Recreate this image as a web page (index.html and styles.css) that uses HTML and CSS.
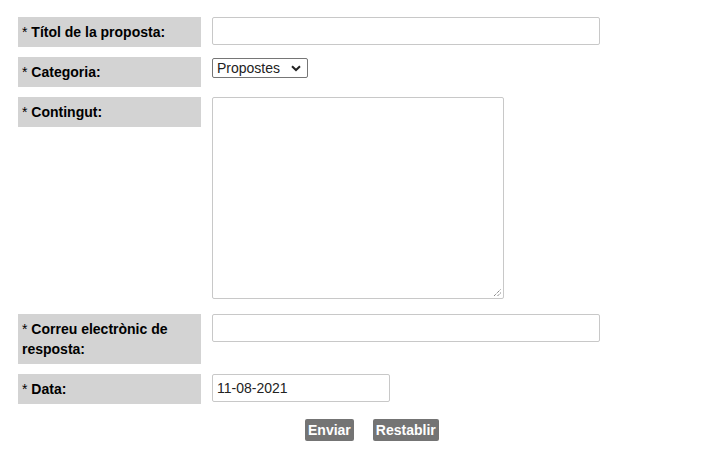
FILE: index.html
```html
<!DOCTYPE html>
<html lang="ca">
<head>
<meta charset="utf-8">
<link rel="stylesheet" href="styles.css">
</head>
<body>
<form class="form">
  <div class="label"><span class="req">*</span> Títol de la proposta:</div>
  <div class="field"><input class="text wide" type="text"></div>

  <div class="label"><span class="req">*</span> Categoria:</div>
  <div class="field">
    <div class="select">
      <span>Propostes</span>
      <svg class="chev" width="10" height="7" viewBox="0 0 10 7"><path d="M1 1.2 L5 5 L9 1.2" fill="none" stroke="#222" stroke-width="2"/></svg>
    </div>
  </div>

  <div class="label"><span class="req">*</span> Contingut:</div>
  <div class="field tall">
    <div class="textarea">
      <svg class="grip" width="9" height="9" viewBox="0 0 9 9"><path d="M1 8 L8 1 M4.5 8 L8 4.5" stroke="#555" stroke-width="1" stroke-dasharray="1 1" fill="none"/></svg>
    </div>
  </div>

  <div class="label"><span class="req">*</span> <span>Correu electrònic de</span><br><span>resposta:</span></div>
  <div class="field"><input class="text wide" type="text"></div>

  <div class="label"><span class="req">*</span> Data:</div>
  <div class="field"><input class="text date" type="text" value="11-08-2021"></div>

  <div class="buttons">
    <button type="button" class="btn">Enviar</button>
    <button type="button" class="btn">Restablir</button>
  </div>
</form>
</body>
</html>
```
FILE: styles.css
```css
html, body {
  margin: 0;
  padding: 0;
  background: #fff;
}
body {
  padding: 17px 0 0 18px;
  font-family: "Liberation Sans", Arial, sans-serif;
}
.form {
  display: grid;
  grid-template-columns: 183px 1fr;
  column-gap: 11px;
  row-gap: 10px;
  width: 680px;
}
.label {
  background: #d3d3d3;
  color: #000;
  font-weight: bold;
  font-size: 14px;
  line-height: 20px;
  padding: 5px 8px 5px 4px;
  align-self: start;
}
.req {
  font-weight: normal;
}
.field {
  display: flex;
  align-items: flex-start;
}
.field.tall {
  height: 207px;
}
.text {
  box-sizing: border-box;
  height: 28px;
  border: 1px solid #c8c8c8;
  border-radius: 2px;
  padding: 0 4px;
  margin: 0;
  font-family: "Liberation Sans", Arial, sans-serif;
  font-size: 14px;
  color: #222;
  background: #fff;
  outline: none;
}
.wide { width: 388px; }
.date { width: 178px; }
.select {
  box-sizing: border-box;
  width: 96px;
  height: 20px;
  margin-top: 1px;
  border: 1px solid #767676;
  border-radius: 2px;
  display: flex;
  align-items: center;
  justify-content: space-between;
  padding: 0 6px 0 4px;
  font-size: 14px;
  color: #222;
}
.chev { display: block; }
.textarea {
  box-sizing: border-box;
  width: 292px;
  height: 202px;
  border: 1px solid #c8c8c8;
  border-radius: 2px;
  position: relative;
}
.grip {
  position: absolute;
  right: 1px;
  bottom: 1px;
}
.buttons {
  grid-column: 1 / 3;
  display: flex;
  gap: 19px;
  padding-left: 287px;
  margin-top: 5px;
}
.btn {
  height: 22px;
  border: none;
  border-radius: 2px;
  background: #747474;
  color: #fff;
  font-family: "Liberation Sans", Arial, sans-serif;
  font-weight: bold;
  font-size: 14px;
  padding: 0 3px;
  margin: 0;
}
```
